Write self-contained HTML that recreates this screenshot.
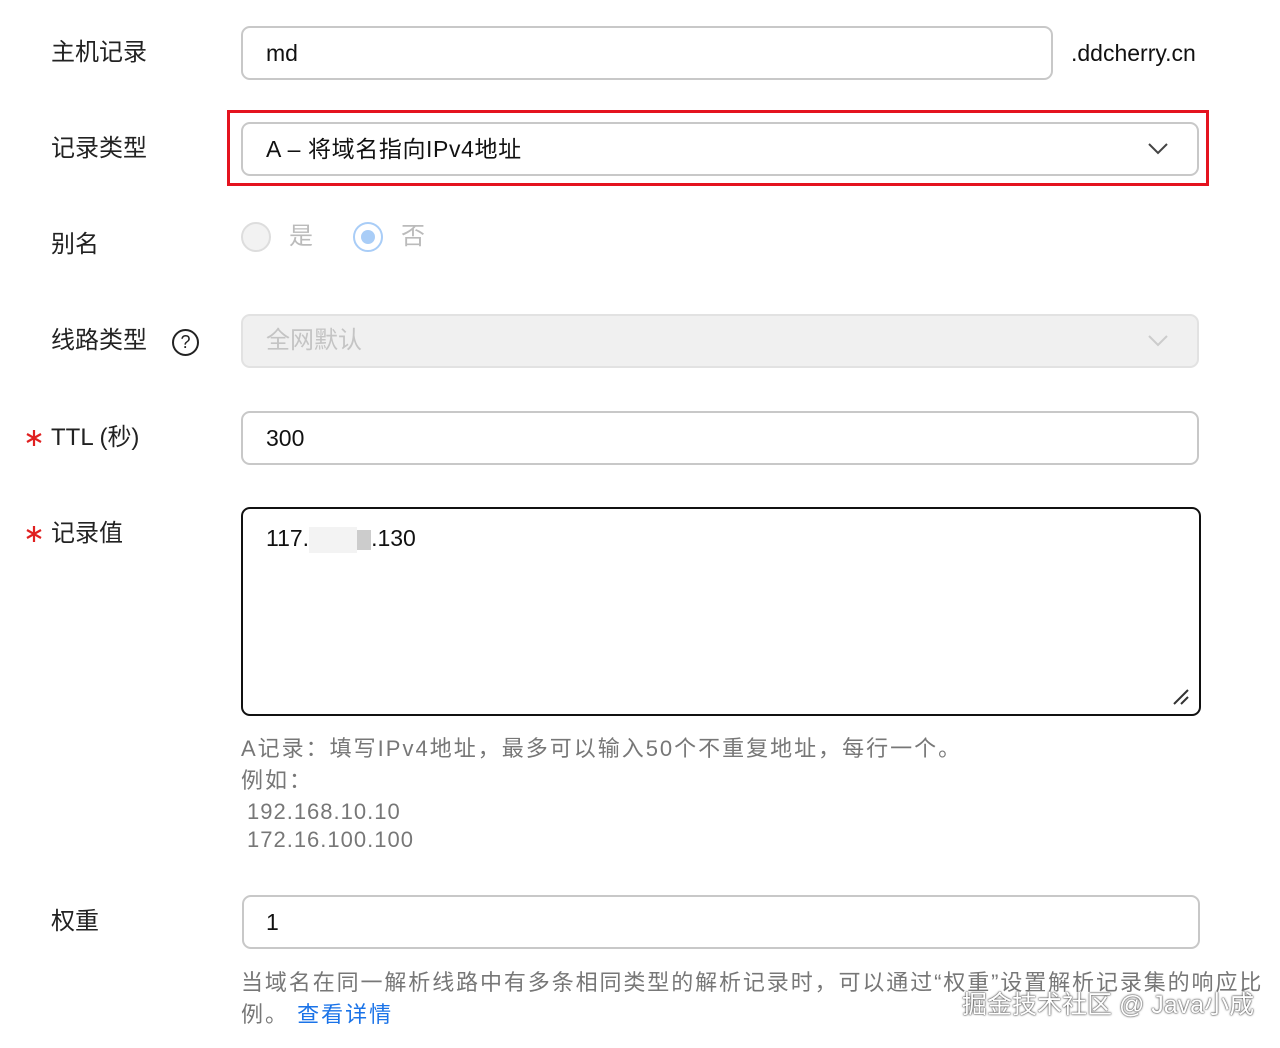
<!DOCTYPE html>
<html><head><meta charset="utf-8"><style>
body{margin:0;width:1280px;height:1048px;background:#fff;position:relative;overflow:hidden;font-family:"Liberation Sans","Noto Sans CJK SC",sans-serif;color:#222}
.a{position:absolute;white-space:nowrap}
.lbl{font-size:24px;line-height:30px;color:#222}
.box{position:absolute;box-sizing:border-box;border:2px solid #c8c8c8;border-radius:9px;background:#fff}
.val{font-size:23px;line-height:30px;color:#111}
.help{font-size:22px;line-height:30px;color:#777;letter-spacing:2px}
.star{position:absolute;color:#e02020;font-size:22px;line-height:30px}
</style></head><body>
<div class="a lbl" style="left:51px;top:38px">主机记录</div>
<div class="box" style="left:241px;top:26px;width:812px;height:54px"></div>
<div class="a val" style="left:266px;top:38px">md</div>
<div class="a val" style="left:1071px;top:38px">.ddcherry.cn</div>

<div class="a lbl" style="left:51px;top:134px">记录类型</div>
<div class="a" style="left:227px;top:110px;width:976px;height:70px;border:3px solid #e4131f"></div>
<div class="box" style="left:241px;top:122px;width:958px;height:54px"></div>
<div class="a val" style="left:266px;top:134px;letter-spacing:0.6px">A – 将域名指向IPv4地址</div>
<svg class="a" style="left:1147px;top:141px" width="22" height="16"><path d="M2 3 L11 12 L20 3" fill="none" stroke="#444" stroke-width="2"/></svg>

<div class="a lbl" style="left:51px;top:230px">别名</div>
<div class="a" style="left:241px;top:222px;width:30px;height:30px;border:2px solid #ddd;border-radius:50%;background:#f2f2f2;box-sizing:border-box"></div>
<div class="a lbl" style="left:289px;top:222px;color:#bbb">是</div>
<div class="a" style="left:353px;top:222px;width:30px;height:30px;border:2px solid #a9cdf7;border-radius:50%;background:#fff;box-sizing:border-box"></div>
<div class="a" style="left:361px;top:230px;width:14px;height:14px;border-radius:50%;background:#a9cdf7"></div>
<div class="a lbl" style="left:401px;top:222px;color:#bbb">否</div>

<div class="a lbl" style="left:51px;top:326px">线路类型</div>
<div class="a" style="left:172px;top:329px;width:27px;height:27px;border:2px solid #222;border-radius:50%;box-sizing:border-box;font-size:18px;line-height:23px;text-align:center">?</div>
<div class="box" style="left:241px;top:314px;width:958px;height:54px;background:#f0f0f0;border-color:#e2e2e2"></div>
<div class="a lbl" style="left:266px;top:326px;color:#c4c4c4">全网默认</div>
<svg class="a" style="left:1147px;top:333px" width="22" height="16"><path d="M2 3 L11 12 L20 3" fill="none" stroke="#ccc" stroke-width="2"/></svg>

<svg class="a" style="left:25px;top:429px" width="18" height="18"><path d="M9 1 V17 M2 5 L16 13 M16 5 L2 13" stroke="#e02020" stroke-width="2.2"/></svg>
<div class="a lbl" style="left:51px;top:423px">TTL (秒)</div>
<div class="box" style="left:241px;top:411px;width:958px;height:54px"></div>
<div class="a val" style="left:266px;top:423px">300</div>

<svg class="a" style="left:25px;top:525px" width="18" height="18"><path d="M9 1 V17 M2 5 L16 13 M16 5 L2 13" stroke="#e02020" stroke-width="2.2"/></svg>
<div class="a lbl" style="left:51px;top:519px">记录值</div>
<div class="box" style="left:241px;top:507px;width:960px;height:209px;border-color:#111"></div>
<div class="a val" style="left:266px;top:523px">117.<span style="display:inline-block;width:48px;height:26px;background:#f3f3f3;vertical-align:middle"></span><span style="display:inline-block;width:14px;height:20px;background:#ccc;vertical-align:middle"></span>.130</div>
<svg class="a" style="left:1172px;top:688px" width="18" height="18"><path d="M2 16 L16 2 M9 16 L16 9" stroke="#333" stroke-width="2"/></svg>

<div class="a help" style="left:241px;top:734px">A记录：填写IPv4地址，最多可以输入50个不重复地址，每行一个。</div>
<div class="a help" style="left:241px;top:766px">例如：</div>
<div class="a help" style="left:247px;top:797px;letter-spacing:1px">192.168.10.10</div>
<div class="a help" style="left:247px;top:825px;letter-spacing:1px">172.16.100.100</div>

<div class="a lbl" style="left:51px;top:907px">权重</div>
<div class="box" style="left:242px;top:895px;width:958px;height:54px"></div>
<div class="a val" style="left:266px;top:907px">1</div>

<div class="a help" style="left:241px;top:968px;letter-spacing:1.9px">当域名在同一解析线路中有多条相同类型的解析记录时，可以通过“权重”设置解析记录集的响应比</div>
<div class="a help" style="left:241px;top:1000px">例。 <span style="color:#1a73e8">查看详情</span></div>
<div class="a" style="left:962px;top:990px;font-size:25px;line-height:30px;color:#fff;text-shadow:0 0 2px #333,0 0 1px #333">掘金技术社区 @ Java小成</div>
</body></html>
